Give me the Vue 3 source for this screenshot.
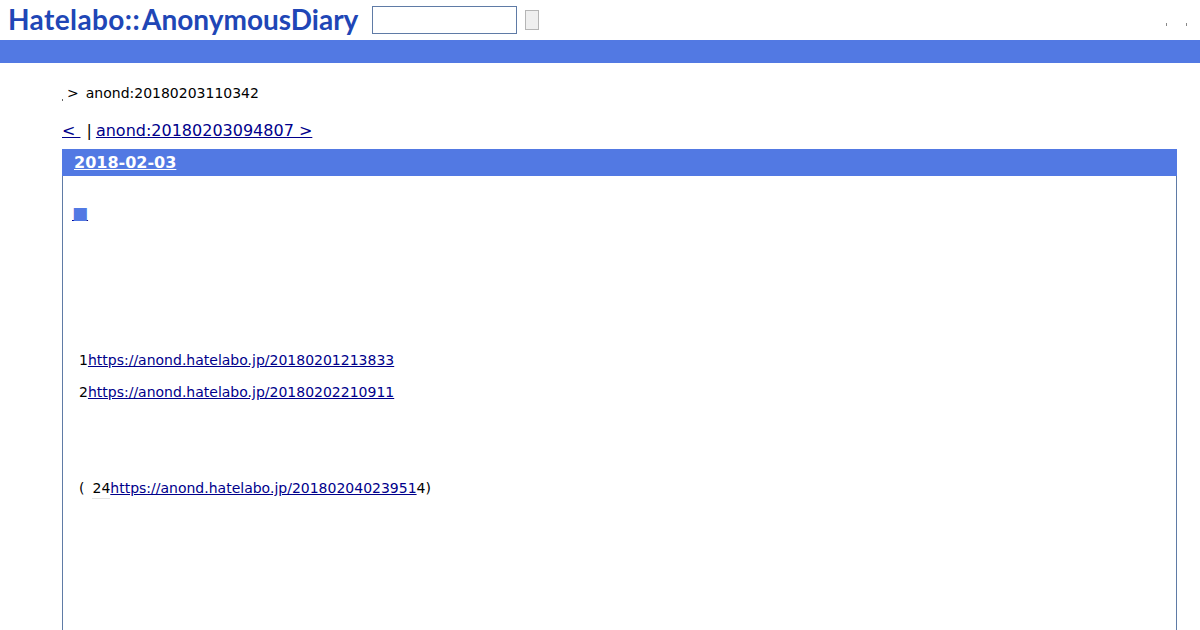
<script setup>
const lines = [
  { pre: '1', url: 'https://anond.hatelabo.jp/20180201213833' },
  { pre: '2', url: 'https://anond.hatelabo.jp/20180202210911' },
]
</script>

<template>
  <div class="page">
    <header class="top">
      <a class="logo"><span class="brand">Hatelabo::</span>AnonymousDiary</a>
      <input class="search" type="text" />
      <button class="go"></button>
      <div class="marks"><i></i><i></i></div>
    </header>
    <div class="bar"></div>
    <main class="content">
      <div class="crumb"><span class="dot"></span><span class="gt">&gt;</span><span>anond:20180203110342</span></div>
      <div class="nav"><a href="#">&lt; </a><span class="sep">|</span><a href="#">anond:20180203094807 &gt;</a></div>
      <section class="day">
        <h2><a href="#">2018-02-03</a></h2>
        <div class="body">
          <h3><a href="#">■</a></h3>
          <p v-for="l in lines" :key="l.pre" class="line">{{ l.pre }}<a href="#">{{ l.url }}</a></p>
          <p class="line third">(<span class="num">24</span><a href="#">https://anond.hatelabo.jp/20180204023951</a>4)</p>
        </div>
      </section>
    </main>
  </div>
</template>

<style>
html, body { margin: 0; background: #fff; overflow: hidden; }
</style>

<style scoped>
.page { height: 630px; overflow: hidden; font-family: "DejaVu Sans", sans-serif; color: #000; }
.top { height: 40px; display: flex; align-items: center; box-sizing: border-box; padding-left: 8px; }
.logo { font-family: "Lato", "Liberation Sans", sans-serif; font-weight: 700; font-size: 28px; line-height: 38px; margin-top: -2px; color: #2046b6; width: 364px; white-space: nowrap; letter-spacing: 0; }
.brand { display: inline-block; margin-right: 2px; letter-spacing: .4px; }
.search { width: 145px; height: 28px; box-sizing: border-box; border: 1px solid #5f7ba6; padding: 0; background: #fff; margin: 0 8px 0 0; }
.go { width: 14px; height: 20px; box-sizing: border-box; padding: 0; border: 1px solid #b5b5b5; background: #efefef; }
.marks { margin-left: auto; display: flex; gap: 19px; padding-right: 13px; padding-top: 8px; }
.marks i { display: block; width: 1px; height: 3px; background: #888; }
.bar { height: 23px; background: #5279e3; }
.content { padding: 0 23px 0 62px; }
.crumb { font-size: 14px; line-height: 17px; margin-top: 22px; display: flex; align-items: center; }
.dot { width: 1px; height: 2px; background: #666; align-self: flex-end; margin-bottom: 1px; }
.gt { margin: 0 7px 0 4px; }
.nav { font-size: 16px; line-height: 19px; margin-top: 19px; }
.nav a, .line a { color: #00008b; text-decoration: underline; }
.sep { margin: 0 4px 0 6px; }
.day { margin-top: 9px; border: 1px solid #5f7ba6; border-top: 0; border-bottom: 0; height: 500px; }
.day h2 { margin: 0 -1px; height: 27px; background: #5279e3; font-size: 16px; line-height: 27px; padding-left: 12px; font-weight: 700; }
.day h2 a { color: #fff; text-decoration: underline; }
.body { padding-left: 9px; }
h3 { margin: 25px 0 0; font-size: 17px; line-height: 25px; font-weight: 400; height: 151px; }
h3 a { color: #5279e3; text-decoration: underline; text-decoration-color: #00008b; }
.line { margin: 0 0 15px 7px; font-size: 14px; line-height: 17px; }
.third { margin-top: 79px; }
.num { margin-left: 8px; border-bottom: 1px solid #e4e4e4; padding-bottom: 2px; }
</style>
